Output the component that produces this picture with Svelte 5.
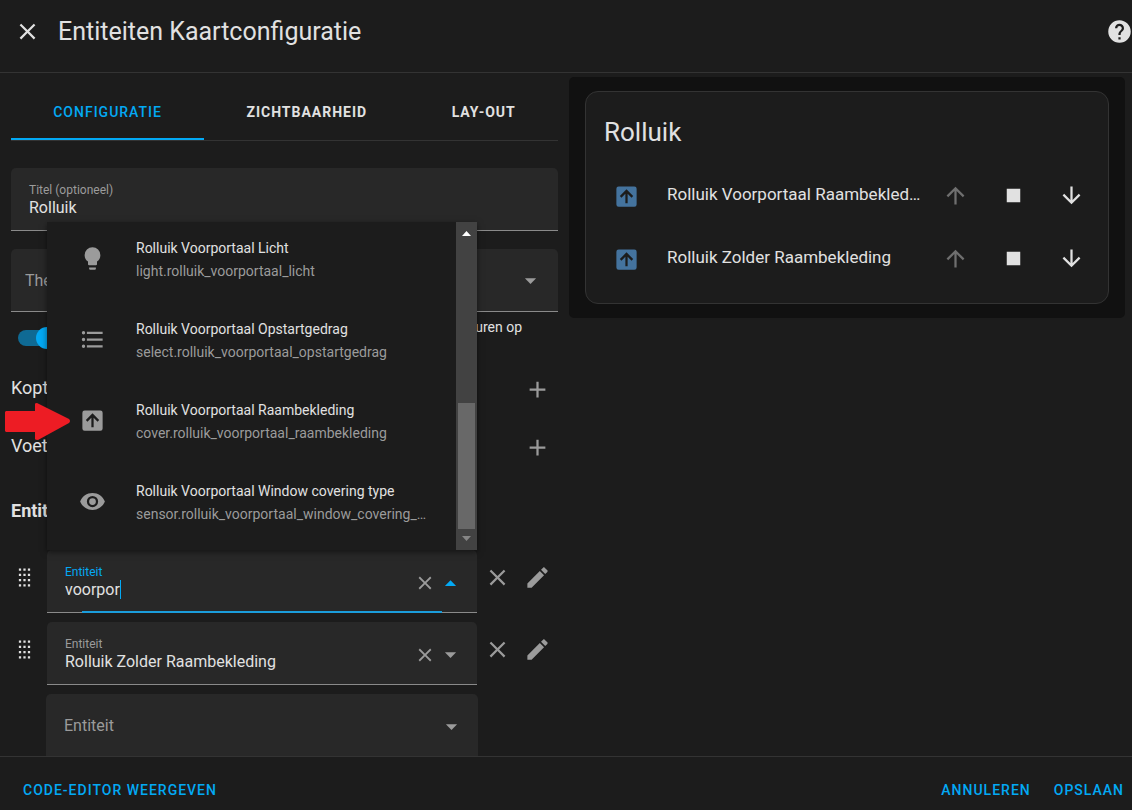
<script>
	// Material icon paths, all on a 24x24 grid
	const icons = {
		close:
			'M19,6.41L17.59,5L12,10.59L6.41,5L5,6.41L10.59,12L5,17.59L6.41,19L12,13.41L17.59,19L19,17.59L13.41,12L19,6.41Z',
		help: 'M15.07,11.25L14.17,12.17C13.45,12.89 13,13.5 13,15H11V14.5C11,13.39 11.45,12.39 12.17,11.67L13.41,10.41C13.78,10.05 14,9.55 14,9C14,7.89 13.1,7 12,7A2,2 0 0,0 10,9H8A4,4 0 0,1 12,5A4,4 0 0,1 16,9C16,9.88 15.64,10.67 15.07,11.25M13,19H11V17H13M12,2A10,10 0 0,0 2,12A10,10 0 0,0 12,22A10,10 0 0,0 22,12C22,6.47 17.5,2 12,2Z',
		bulb: 'M12,2A7,7 0 0,0 5,9C5,11.38 6.19,13.47 8,14.74V17A1,1 0 0,0 9,18H15A1,1 0 0,0 16,17V14.74C17.81,13.47 19,11.38 19,9A7,7 0 0,0 12,2M9,21A1,1 0 0,0 10,22H14A1,1 0 0,0 15,21V20H9V21Z',
		list: 'M7,5H21V7H7V5M7,13V11H21V13H7M4,4.5A1.5,1.5 0 0,1 5.5,6A1.5,1.5 0 0,1 4,7.5A1.5,1.5 0 0,1 2.5,6A1.5,1.5 0 0,1 4,4.5M4,10.5A1.5,1.5 0 0,1 5.5,12A1.5,1.5 0 0,1 4,13.5A1.5,1.5 0 0,1 2.5,12A1.5,1.5 0 0,1 4,10.5M7,19V17H21V19H7M4,16.5A1.5,1.5 0 0,1 5.5,18A1.5,1.5 0 0,1 4,19.5A1.5,1.5 0 0,1 2.5,18A1.5,1.5 0 0,1 4,16.5Z',
		cover:
			'M21,19A2,2 0 0,1 19,21H5A2,2 0 0,1 3,19V5A2,2 0 0,1 5,3H19A2,2 0 0,1 21,5V19M13,18V9.5L16.5,13L17.92,11.58L12,5.66L6.08,11.58L7.5,13L11,9.5V18H13Z',
		eye: 'M12,9A3,3 0 0,0 9,12A3,3 0 0,0 12,15A3,3 0 0,0 15,12A3,3 0 0,0 12,9M12,17A5,5 0 0,1 7,12A5,5 0 0,1 12,7A5,5 0 0,1 17,12A5,5 0 0,1 12,17M12,4.5C7,4.5 2.73,7.61 1,12C2.73,16.39 7,19.5 12,19.5C17,19.5 21.27,16.39 23,12C21.27,7.61 17,4.5 12,4.5Z',
		up: 'M13,20H11V8L5.5,13.5L4.08,12.08L12,4.16L19.92,12.08L18.5,13.5L13,8V20Z',
		down: 'M11,4H13V16L18.5,10.5L19.92,11.92L12,19.84L4.08,11.92L5.5,10.5L11,16V4Z',
		stop: 'M18,18H6V6H18V18Z',
		menuDown: 'M7,10L12,15L17,10H7Z',
		menuUp: 'M7,15L12,10L17,15H7Z',
		plus: 'M19,13H13V19H11V13H5V11H11V5H13V11H19V13Z',
		pencil:
			'M20.71,7.04C21.1,6.65 21.1,6 20.71,5.63L18.37,3.29C18,2.9 17.35,2.9 16.96,3.29L15.12,5.12L18.87,8.87M3,17.25V21H6.75L17.81,9.93L14.06,6.18L3,17.25Z',
		drag: 'M7,4H9V6H7V4M11,4H13V6H11V4M15,4H17V6H15V4M7,8.7H9V10.7H7V8.7M11,8.7H13V10.7H11V8.7M15,8.7H17V10.7H15V8.7M7,13.3H9V15.3H7V13.3M11,13.3H13V15.3H11V13.3M15,13.3H17V15.3H15V13.3M7,18H9V20H7V18M11,18H13V20H11V18M15,18H17V20H15V18Z'
	};

	const tabs = ['Configuratie', 'Zichtbaarheid', 'Lay-out'];
	let activeTab = $state('Configuratie');

	let title = $state('Rolluik');
	let theme = $state('');
	let colorIcons = $state(true);

	const sections = ['Koptekst', 'Voettekst'];

	let entities = $state([
		{ id: 'entity-1', value: 'voorpor', open: true },
		{ id: 'entity-2', value: 'Rolluik Zolder Raambekleding', open: false }
	]);
	let newEntity = $state('');

	const options = [
		{ icon: 'bulb', name: 'Rolluik Voorportaal Licht', id: 'light.rolluik_voorportaal_licht' },
		{
			icon: 'list',
			name: 'Rolluik Voorportaal Opstartgedrag',
			id: 'select.rolluik_voorportaal_opstartgedrag'
		},
		{
			icon: 'cover',
			name: 'Rolluik Voorportaal Raambekleding',
			id: 'cover.rolluik_voorportaal_raambekleding'
		},
		{
			icon: 'eye',
			name: 'Rolluik Voorportaal Window covering type',
			id: 'sensor.rolluik_voorportaal_window_covering_type'
		}
	];

	const covers = ['Rolluik Voorportaal Raambekleding', 'Rolluik Zolder Raambekleding'];

	function pick(entity, option) {
		entity.value = option.name;
		entity.open = false;
	}
</script>

{#snippet icon(name)}
	<svg class="icon" viewBox="0 0 24 24" aria-hidden="true"><path d={icons[name]} /></svg>
{/snippet}

<div class="dialog">
	<header>
		<button class="icon-button" aria-label="Sluiten">{@render icon('close')}</button>
		<h1>Entiteiten Kaartconfiguratie</h1>
		<button class="icon-button help" aria-label="Help">{@render icon('help')}</button>
	</header>

	<main>
		<section class="editor">
			<div class="tabs" role="tablist">
				{#each tabs as tab}
					<button
						role="tab"
						class:active={tab === activeTab}
						aria-selected={tab === activeTab}
						onclick={() => (activeTab = tab)}>{tab}</button
					>
				{/each}
			</div>

			<div class="field title-field">
				<div class="text">
					<label for="title">Titel (optioneel)</label>
					<input id="title" type="text" bind:value={title} />
				</div>
			</div>

			<div class="field theme-field">
				<select aria-label="Thema (optioneel)" bind:value={theme}>
					<option value="">Thema (optioneel)</option>
					<option value="default">Standaard</option>
				</select>
				<span class="select-arrow">{@render icon('menuDown')}</span>
			</div>

			<div class="toggle-row">
				<input id="color-icons" class="switch" type="checkbox" bind:checked={colorIcons} />
				<label for="color-icons">Pictogrammen kleuren op<br />basis van status</label>
			</div>

			{#each sections as section}
				<div class="section-row">
					<span>{section}</span>
					<button class="icon-button small" aria-label="{section} toevoegen">
						{@render icon('plus')}
					</button>
				</div>
			{/each}

			<h2>Entiteiten (verplicht)</h2>

			<div class="entities">
				{#each entities as entity}
					<div class="entity">
						<span class="handle">{@render icon('drag')}</span>
						<div class="picker">
							<div class="field" class:focused={entity.open}>
								<div class="text">
									<label for={entity.id}>Entiteit</label>
									<div class="value">
										<input id={entity.id} type="text" autocomplete="off" bind:value={entity.value} />
										{#if entity.open}
											<span class="caret" aria-hidden="true"><i>{entity.value}</i></span>
										{/if}
									</div>
								</div>
								<button class="clear" aria-label="Wissen" onclick={() => (entity.value = '')}>
									{@render icon('close')}
								</button>
								<button
									class="toggle"
									aria-label="Lijst tonen"
									onclick={() => (entity.open = !entity.open)}
								>
									{@render icon(entity.open ? 'menuUp' : 'menuDown')}
								</button>
							</div>

							{#if entity.open}
								<div class="menu">
									<ul role="listbox" aria-label="Entiteiten">
										{#each options as option}
											<li role="option" aria-selected="false">
												<button onclick={() => pick(entity, option)}>
													{@render icon(option.icon)}
													<span class="lines">
														<span class="name">{option.name}</span>
														<span class="id">{option.id}</span>
													</span>
												</button>
											</li>
										{/each}
									</ul>
									<div class="scrollbar">
										<svg viewBox="0 0 21 21"><path d="M6 14L10.5 9L15 14Z" /></svg>
										<div class="track"><div class="thumb"></div></div>
										<svg class="end" viewBox="0 0 21 21"><path d="M6 7L10.5 12L15 7Z" /></svg>
									</div>
								</div>
								<svg class="pointer" viewBox="0 0 65 37" aria-hidden="true">
									<path d="M1 8H30V1Q30 0 32 0L64 16Q66 18 64 20L33 37Q30 37 30 36V29H1L0 28V9Z" />
								</svg>
							{/if}
						</div>
						<button class="icon-button small" aria-label="Verwijderen">{@render icon('close')}</button>
						<button class="icon-button small" aria-label="Bewerken">{@render icon('pencil')}</button>
					</div>
				{/each}

				<div class="field new-entity">
					<input type="text" aria-label="Entiteit" placeholder="Entiteit" bind:value={newEntity} />
					<button class="toggle" aria-label="Lijst tonen">{@render icon('menuDown')}</button>
				</div>
			</div>
		</section>

		<section class="preview">
			<div class="card">
				<h3>{title}</h3>
				{#each covers as cover}
					<div class="cover">
						<span class="state">{@render icon('cover')}</span>
						<span class="cover-name">{cover}</span>
						<button disabled aria-label="Openen">{@render icon('up')}</button>
						<button aria-label="Stoppen">{@render icon('stop')}</button>
						<button aria-label="Sluiten">{@render icon('down')}</button>
					</div>
				{/each}
			</div>
		</section>
	</main>

	<footer>
		<button>Code-editor weergeven</button>
		<span class="spacer"></span>
		<button>Annuleren</button>
		<button>Opslaan</button>
	</footer>
</div>

<style>
	:global(body) {
		margin: 0;
		background: #1c1c1c;
	}

	.dialog {
		--primary: #03a9f4;
		--text: #e1e1e1;
		--text-2: #9b9b9b;
		--line: #333;
		--field: #282828;
		display: flex;
		flex-direction: column;
		height: 100vh;
		background: #1c1c1c;
		color: var(--text);
		font-family: Roboto, sans-serif;
		font-size: 16px;
	}

	button,
	input,
	select {
		margin: 0;
		padding: 0;
		border: 0;
		outline: 0;
		background: none;
		color: inherit;
		font: inherit;
	}

	button {
		cursor: pointer;
	}

	.icon {
		display: block;
		flex: none;
		width: 27px;
		height: 27px;
		fill: currentColor;
	}

	.icon-button {
		display: flex;
		align-items: center;
		justify-content: center;
		flex: none;
		width: 54px;
		height: 54px;
	}

	.icon-button.small {
		width: 40px;
		height: 54px;
		color: var(--text-2);
	}

	/* header */
	header {
		display: flex;
		align-items: center;
		flex: none;
		height: 63px;
		padding-bottom: 9px;
		border-bottom: 1px solid var(--line);
	}

	h1 {
		flex: 1;
		margin: 0 0 0 4px;
		font-size: 25px;
		font-weight: 400;
		line-height: 32px;
	}

	.help {
		width: 26px;
	}

	/* two columns */
	main {
		display: grid;
		grid-template-columns: minmax(0, 547fr) minmax(0, 556fr);
		gap: 11px;
		flex: 1;
		min-height: 0;
		padding: 0 7px 0 11px;
		overflow: hidden;
	}

	.tabs {
		display: flex;
		margin-top: 11px;
		border-bottom: 1px solid var(--line);
	}

	.tabs button {
		flex: 1 1 auto;
		height: 56px;
		box-sizing: border-box;
		border-top: 2px solid transparent;
		border-bottom: 2px solid transparent;
		font-size: 14px;
		font-weight: 700;
		letter-spacing: 1px;
		text-transform: uppercase;
	}

	.tabs .active {
		border-bottom-color: var(--primary);
		color: var(--primary);
		font-weight: 500;
	}

	/* form fields */
	.field {
		position: relative;
		display: flex;
		align-items: center;
		box-sizing: border-box;
		height: 63px;
		padding: 2px 0 0 18px;
		border-bottom: 1px solid #8a8a8a;
		border-radius: 5px 5px 0 0;
		background: var(--field);
	}

	.field .text {
		flex: 1;
		min-width: 0;
	}

	.field label {
		display: block;
		color: var(--text-2);
		font-size: 12px;
		line-height: 16px;
	}

	.field input {
		display: block;
		width: 100%;
		height: 20px;
		line-height: 20px;
	}

	.field input::placeholder {
		color: var(--text-2);
		opacity: 1;
	}

	.title-field {
		margin-top: 27px;
	}

	.theme-field {
		margin-top: 18px;
		padding: 0 0 0 14px;
		color: var(--text-2);
	}

	.theme-field select {
		flex: 1;
		height: 100%;
		appearance: none;
	}

	.select-arrow {
		padding-right: 14px;
	}

	.toggle-row {
		display: flex;
		align-items: center;
		justify-content: space-between;
		padding: 4px 36px 0 7px;
		font-size: 14px;
		line-height: 22px;
	}

	.switch {
		position: relative;
		flex: none;
		width: 40px;
		height: 16px;
		border-radius: 8px;
		appearance: none;
		background: #0f6a94;
	}

	.switch::before {
		content: '';
		position: absolute;
		top: -3px;
		right: 0;
		width: 22px;
		height: 22px;
		border-radius: 50%;
		background: var(--primary);
	}

	.switch:not(:checked)::before {
		right: auto;
		left: 0;
	}

	.section-row {
		display: flex;
		align-items: center;
		justify-content: space-between;
		height: 58px;
		padding-right: 1px;
		font-size: 18px;
	}

	.section-row span {
		padding-bottom: 3px;
	}

	h2 {
		margin: 23px 0 27px;
		font-size: 18px;
		font-weight: 700;
		line-height: 24px;
	}

	/* entity rows */
	.entities {
		display: flex;
		flex-direction: column;
		gap: 9px;
	}

	.entity {
		display: flex;
		padding-right: 1px;
	}

	.handle {
		flex: none;
		width: 36px;
		padding-top: 14px;
	}

	.picker {
		position: relative;
		flex: 1;
		min-width: 0;
	}

	.focused::after {
		content: '';
		position: absolute;
		right: 35px;
		bottom: -1px;
		left: 35px;
		height: 2px;
		background: #1b9ddb;
	}

	.focused label,
	.focused .toggle {
		color: var(--primary);
	}

	.value {
		position: relative;
	}

	.caret {
		position: absolute;
		top: 0;
		left: 0;
		height: 19px;
		box-sizing: border-box;
		border-right: 1px solid var(--primary);
		pointer-events: none;
	}

	.caret i {
		visibility: hidden;
		font-style: normal;
	}

	.clear,
	.toggle {
		display: flex;
		align-items: center;
		justify-content: center;
		flex: none;
		width: 27px;
		height: 27px;
		color: var(--text-2);
	}

	.clear {
		width: 25px;
		margin-top: 2px;
	}

	.clear .icon {
		width: 22px;
		height: 22px;
	}

	.toggle {
		margin-right: 13px;
	}

	.new-entity {
		margin: 0 80px 0 35px;
	}

	.new-entity input {
		flex: 1;
	}

	/* dropdown */
	.menu {
		position: absolute;
		right: 0;
		bottom: 100%;
		left: 0;
		z-index: 2;
		display: flex;
		height: 328px;
		background: #1c1c1c;
		box-shadow: 0 2px 6px rgba(0, 0, 0, 0.5);
	}

	.menu ul {
		display: flex;
		flex: 1;
		flex-direction: column;
		justify-content: flex-end;
		min-width: 0;
		margin: 0;
		padding: 0 0 8px;
		overflow: hidden;
		list-style: none;
	}

	.menu li {
		flex: none;
	}

	.menu li button {
		display: flex;
		align-items: center;
		gap: 30px;
		width: 100%;
		height: 81px;
		padding: 0 26px 0 32px;
		color: var(--text-2);
		font-size: 14px;
		text-align: left;
	}

	.lines {
		min-width: 0;
		padding-top: 2px;
	}

	.lines span {
		display: block;
		overflow: hidden;
		line-height: 23px;
		text-overflow: ellipsis;
		white-space: nowrap;
	}

	.lines .name {
		color: var(--text);
	}

	.scrollbar {
		display: flex;
		flex: none;
		flex-direction: column;
		width: 21px;
		background: #424242;
	}

	.scrollbar svg {
		width: 21px;
		height: 21px;
		fill: #fff;
	}

	.scrollbar .end {
		fill: #868686;
	}

	.track {
		display: flex;
		flex: 1;
		flex-direction: column;
		justify-content: flex-end;
		padding: 0 2px;
	}

	.thumb {
		height: 44%;
		background: #686868;
	}

	.pointer {
		position: absolute;
		bottom: 173px;
		left: -42px;
		z-index: 3;
		width: 65px;
		height: 37px;
		fill: #ed1c24;
	}

	/* preview */
	.preview {
		align-self: start;
		margin-top: 4px;
		padding: 14px 16px;
		border-radius: 5px;
		background: #111;
	}

	.card {
		padding: 22px 8px 13px 18px;
		border: 1px solid var(--line);
		border-radius: 13px;
		background: #1c1c1c;
	}

	h3 {
		margin: 0 0 14px;
		font-size: 26px;
		font-weight: 400;
		line-height: 36px;
	}

	.cover {
		display: flex;
		align-items: center;
		height: 63px;
	}

	.state {
		flex: none;
		padding: 2px 27px 0 9px;
		color: #44739e;
	}

	.cover-name {
		flex: 1;
		padding: 0 2px 4px 0;
		overflow: hidden;
		font-size: 17px;
		text-overflow: ellipsis;
		white-space: nowrap;
	}

	.cover button {
		display: flex;
		align-items: center;
		justify-content: center;
		flex: none;
		width: 58px;
		height: 54px;
	}

	.cover button:disabled {
		color: #6f6f6f;
	}

	/* footer */
	footer {
		display: flex;
		align-items: center;
		flex: none;
		gap: 6px;
		height: 40px;
		padding: 13px 0 0 14px;
		border-top: 1px solid var(--line);
	}

	footer button {
		padding: 0 8px 0 9px;
		height: 40px;
		color: var(--primary);
		font-size: 14px;
		font-weight: 500;
		letter-spacing: 1px;
		text-transform: uppercase;
	}

	.spacer {
		flex: 1;
	}
</style>
